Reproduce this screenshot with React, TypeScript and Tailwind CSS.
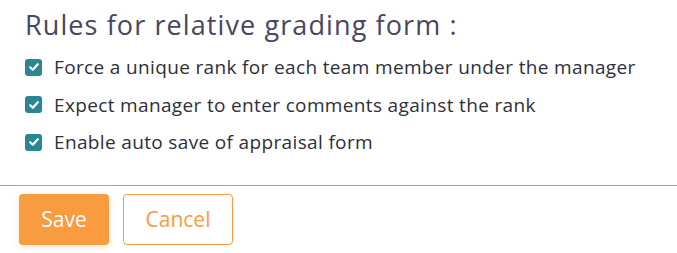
import React from "react";

const Check = () => (
  <span className="flex h-[17px] w-[17px] shrink-0 items-center justify-center rounded-[3px] bg-[#2a8692]">
    <svg width="12" height="12" viewBox="0 0 12 12" fill="none">
      <path d="M2.2 6.3 L4.8 8.8 L9.8 3.2" stroke="white" strokeWidth="2.2" strokeLinecap="round" strokeLinejoin="round" />
    </svg>
  </span>
);

const rules = [
  "Force a unique rank for each team member under the manager",
  "Expect manager to enter comments against the rank",
  "Enable auto save of appraisal form",
];

export default function App() {
  return (
    <div className="w-[677px] h-[253px] bg-white" style={{ fontFamily: '"Open Sans", sans-serif' }}>
      <div className="pl-[25px] pt-[8px]">
        <h2 className="text-[27px] leading-[34px] text-[#4a4560] tracking-[1.1px]">Rules for relative grading form :</h2>
        <div className="mt-[12px] flex flex-col gap-[11.5px]">
          {rules.map((r) => (
            <label key={r} className="flex items-center gap-[12px] text-[19px] leading-[26px] tracking-[0.35px] text-[#2f2f3a]">
              <Check />
              <span>{r}</span>
            </label>
          ))}
        </div>
      </div>
      <div className="mt-[30px] border-t border-[#a3a6c6]" />
      <div className="flex gap-[14px] pl-[19px] pt-[8px]">
        <button className="h-[51px] w-[90px] rounded-[4px] bg-[#f99b3f] text-[21px] font-medium text-white shadow-[0_2px_6px_rgba(249,155,63,0.25)]">Save</button>
        <button className="h-[51px] w-[110px] rounded-[4px] border border-[#f99b3f] bg-white text-[21px] text-[#f99b3f]">Cancel</button>
      </div>
    </div>
  );
}
